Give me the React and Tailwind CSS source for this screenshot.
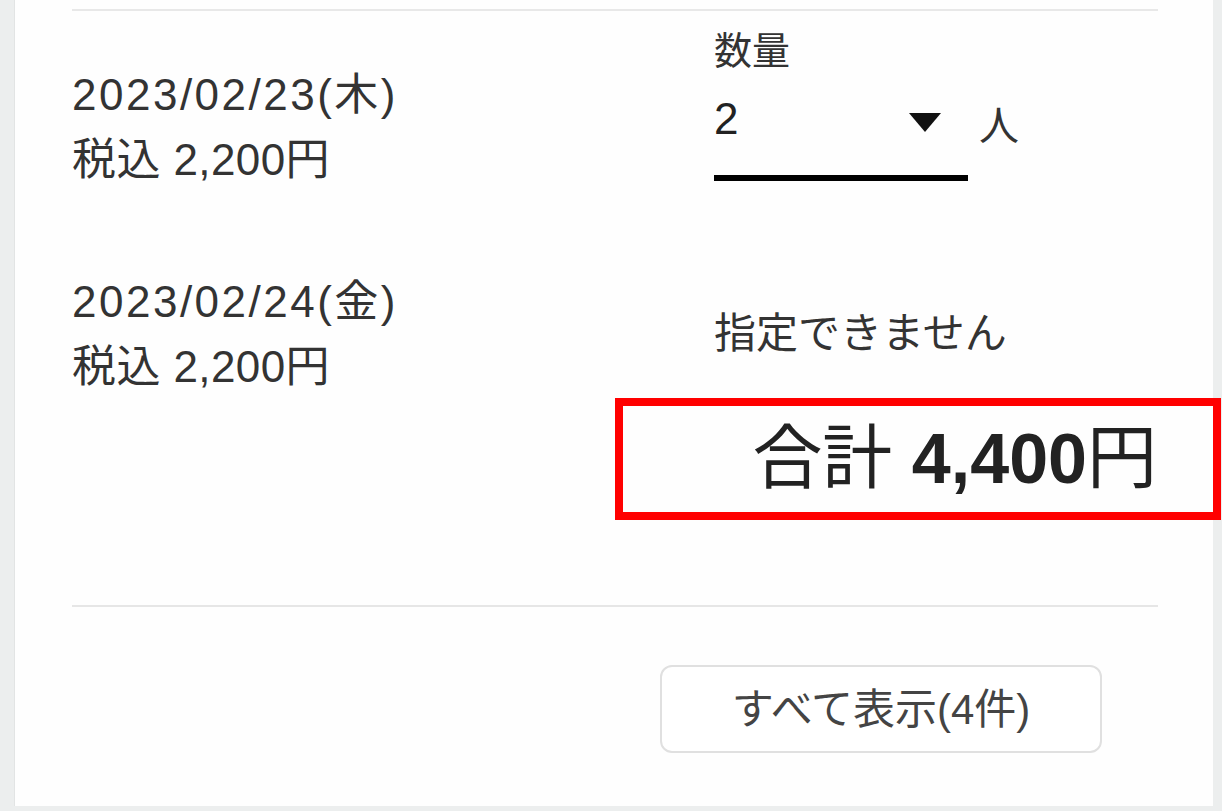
const font = { fontFamily: '"Liberation Sans", "Noto Sans CJK JP", sans-serif' }

const DateRow = ({ date, price }) => (
  <div className="text-[44px] leading-[65px] text-[#333]">
    <p className="tracking-[2.5px]">{date}</p>
    <p className="tracking-[0.4px]">{price}</p>
  </div>
)

export default function App() {
  return (
    <div
      className="w-[1222px] h-[811px] overflow-hidden bg-[#eceeee] pl-[14px] pr-[9px] pb-[5px]"
      style={font}
    >
      <div className="relative h-full bg-[#fefefe] pl-[57px] pr-[55px] border-l border-[#e2e4e4]">
        <div className="h-[9px]" />
        <div className="border-t-2 border-[#e8e8e8]" />

        {/* row 1 */}
        <div className="flex h-[239px]">
          <div className="w-[642px] pt-[51px]">
            <DateRow date="2023/02/23(木)" price="税込 2,200円" />
          </div>
          <div className="pt-[21px]">
            <p className="text-[38px] leading-[38px] text-[#333]">数量</p>
            <div className="flex items-start mt-[27px]">
              <div className="w-[254px] border-b-[6px] border-black flex items-start justify-between pb-[34px]">
                <span className="text-[44px] leading-[44px] text-[#222]">2</span>
                <svg width="32" height="19" viewBox="0 0 32 19" className="mr-[27px] mt-[16px]">
                  <path d="M0 0 L32 0 L16 19 Z" fill="#111" />
                </svg>
              </div>
              <span className="ml-[11px] mt-[9px] text-[40px] leading-[40px] text-[#333]">人</span>
            </div>
          </div>
        </div>

        {/* row 2 */}
        <div className="flex h-[148px]">
          <div className="w-[642px] pt-[19px]">
            <DateRow date="2023/02/24(金)" price="税込 2,200円" />
          </div>
          <div className="pt-[63px]">
            <p className="text-[42px] leading-[42px] text-[#333]">指定できません</p>
          </div>
        </div>

        {/* total */}
        <div className="relative h-[122px] flex items-center justify-end pr-[1px]">
          <p className="text-[70px] leading-[70px] text-[#222]">
            合計 <span className="font-bold">4,400</span>円
          </p>
          <div className="absolute top-0 left-[543px] w-[606px] h-[122px] border-[8px] border-[#ff0000]" />
        </div>

        <div className="mt-[85px] border-t-2 border-[#e6e6e6]" />

        <div className="flex justify-end pt-[58px] pr-[56px]">
          <button className="w-[442px] h-[88px] rounded-[12px] border-2 border-[#e0e0e0] bg-white text-[42px] text-[#444]">
            すべて表示(4件)
          </button>
        </div>
      </div>
    </div>
  )
}
